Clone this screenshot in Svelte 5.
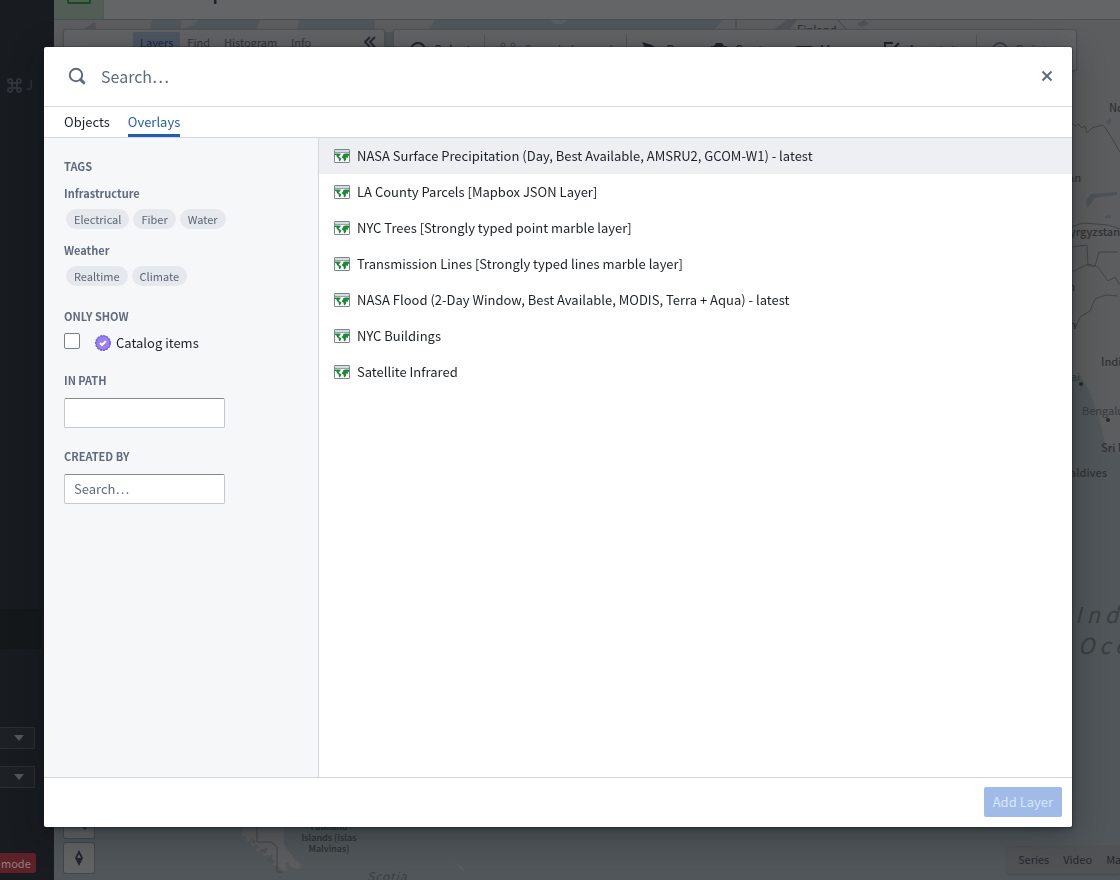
<script lang="ts">
  const tabs = ["Objects", "Overlays"];

  const tagGroups = [
    { name: "Infrastructure", tags: ["Electrical", "Fiber", "Water"] },
    { name: "Weather", tags: ["Realtime", "Climate"] },
  ];

  const layers = [
    "NASA Surface Precipitation (Day, Best Available, AMSRU2, GCOM-W1) - latest",
    "LA County Parcels [Mapbox JSON Layer]",
    "NYC Trees [Strongly typed point marble layer]",
    "Transmission Lines [Strongly typed lines marble layer]",
    "NASA Flood (2-Day Window, Best Available, MODIS, Terra + Aqua) - latest",
    "NYC Buildings",
    "Satellite Infrared",
  ];

  let activeTab = $state("Overlays");
  let selected = $state(0);
  let query = $state("");
  let path = $state("");
  let author = $state("");
  let catalogOnly = $state(false);
</script>

<div class="app">
  <aside class="rail">
    <div class="shortcut">
      <svg width="15" height="15" viewBox="0 0 15 15">
        <path d="M5 5V3a2 2 0 1 0-2 2h9a2 2 0 1 0-2-2v9a2 2 0 1 0 2-2H3a2 2 0 1 0 2 2z" />
      </svg>
      <span>J</span>
    </div>
    <div class="rail-bottom">
      <div class="rail-row"></div>
      {#each ["Branch", "Version"] as name}
        <button class="rail-select" aria-label={name}>
          <svg width="10" height="6" viewBox="0 0 10 6"><path d="M0 0h10L5 6z" /></svg>
        </button>
      {/each}
      <span class="mode">mode</span>
    </div>
  </aside>

  <main class="workspace">
    <header class="titlebar">
      <div class="app-icon">
        <svg width="24" height="24" viewBox="0 0 24 24">
          <rect x="1" y="1" width="22" height="22" rx="1" />
          <path d="M7 13v6M7 19h4" />
        </svg>
      </div>
      <span class="title">Untitled map</span>
    </header>

    <div class="canvas">
      <svg class="map" viewBox="54 20 1066 860" preserveAspectRatio="xMinYMin slice">
        <g class="land">
          <path d="M54 20H152L150 30H140L143 50H54z M181 20h17l-4 5-13 4z M260 20h40l-4 12h-40z M375 20h60l-8 12h-52z M550 20l5 4h8l4-4z M722 20h398V455L1110 444 1106 448 1101 425 1094 403 1086 385 1080 376 1072 378V100L700 50z" />
          <path d="M240 826l3 6-2 4 5 1 1 5 4-2 1 6 5 1-1 4 5 0 2 5 5-1 1 5 6 0-2 5 5 1 5 5 5-1-3-6 3-2 3 5 6 2 5-1-4-3 6 1-9-6-4-6-4-5-3-5v-17z M454 862l9 6v3l-3-3z" />
        </g>
        <g class="water">
          <path d="M773 30l14-10h10l-8 10z M1086 201l5-7 26-2v3l-22 3-8 10z M1105 216l6-1v3h-6z M1106 122l5-4v5l-3 2z" />
          <path d="M82 30l13-8 1 8z M857 24l7-4 5 4-8 3z" />
          <path d="M250 838l6 3-2 3 7 4-5-1z M259 850l9-2-3 6z M266 860l6-6 1 9z" />
        </g>
        <g class="borders">
          <path d="M736 20v10 M838 20l8 9 M257 826v16h14l6 5v25h6" />
          <path d="M1072 124l4 2 2-2 4 4 3-2 2 7 5-5 10-3 3 2 15 25 M1072 227l10-4 14 1 12 1 12 4 M1072 247l15-2 1 21h7l4-14h19 M1072 272l16-8 10 3 10 14 7-4 5 8 M1118 296l-12-1-11 4-5 12-10 6-5 11" />
        </g>
        <g class="cities">
          <circle cx="1081" cy="384" r="2" />
          <circle cx="1108" cy="420" r="2" />
        </g>
        <g class="labels">
          <text x="797" y="34">Finland</text>
          <text x="1109" y="112">Norilsk</text>
          <text x="1081" y="182" text-anchor="end">Kazakhstan</text>
          <text x="1120" y="236" text-anchor="end">Kyrgyzstan</text>
          <text x="1075" y="291" text-anchor="end">Iran</text>
          <text x="1076" y="329" text-anchor="end">Oman</text>
          <text x="1101" y="366">India</text>
          <text class="city" x="1080" y="381" text-anchor="end">Mumbai</text>
          <text class="city" x="1082" y="415">Bengaluru</text>
          <text x="1101" y="452">Sri Lanka</text>
          <text x="1107" y="477" text-anchor="end">Maldives</text>
        </g>
        <g class="small-labels" text-anchor="middle">
          <text x="329" y="830">Falkland</text>
          <text x="329" y="841">Islands (Islas</text>
          <text x="329" y="852">Malvinas)</text>
        </g>
        <g class="sea-labels">
          <text x="1075" y="623">Indian</text>
          <text x="1078" y="654">Ocean</text>
          <text class="sea-small" x="367" y="881">Scotia</text>
        </g>
      </svg>

      <div class="panels">
        <nav class="side-panel">
          <a class="panel-tab current" href="#layers">Layers</a>
          <a class="panel-tab" href="#find">Find</a>
          <a class="panel-tab" href="#histogram">Histogram</a>
          <a class="panel-tab" href="#info">Info</a>
          <button class="collapse" aria-label="Collapse panel">
            <svg width="12" height="12" viewBox="0 0 12 12"><path d="M6 1L1 6l5 5M11 1L6 6l5 5" /></svg>
          </button>
        </nav>
        <div class="toolbar">
          <button class="tool">
            <svg width="16" height="16" viewBox="0 0 16 16"><circle cx="8" cy="8" r="7" /></svg>
            Select
          </button>
          <button class="tool muted divided">
            <svg width="16" height="16" viewBox="0 0 16 16"><circle class="thin" cx="3" cy="3" r="2" /><circle class="thin" cx="13" cy="3" r="2" /><path d="M4 5l4 8 4-8" /></svg>
            Search Around
          </button>
          <button class="tool divided">
            <svg width="16" height="16" viewBox="0 0 16 16"><path class="fill" d="M0 0l10 3 4 3-5 8-4-4z" /></svg>
            Draw
          </button>
          <button class="tool">
            <svg width="16" height="16" viewBox="0 0 16 16"><path class="fill" d="M0 4h3l2-3h6l2 3h3v11H0z" /></svg>
            Capture
          </button>
          <button class="tool">
            <svg width="16" height="16" viewBox="0 0 16 16"><path class="fill" d="M0 4h16v8H0z" /></svg>
            Measure
          </button>
          <button class="tool">
            <svg width="16" height="16" viewBox="0 0 16 16"><path d="M9 1H1v14h12V8M6 10l9-9" /></svg>
            Annotate
          </button>
          <button class="tool muted divided">
            <svg width="16" height="16" viewBox="0 0 16 16"><circle cx="8" cy="8" r="7" /></svg>
            Pointer
          </button>
        </div>
      </div>

      <div class="map-controls">
        <div class="zoom">
          <button aria-label="Zoom to area">
            <svg width="16" height="16" viewBox="0 0 16 16"><circle cx="6" cy="6" r="4" /><path d="M9 9l6 5" /></svg>
          </button>
          <button aria-label="Reset bearing">
            <svg width="16" height="16" viewBox="0 0 16 16"><path class="needle" fill-rule="evenodd" d="M8 0l4 8-4 8-4-8zM8 4L6 8h4z" /></svg>
          </button>
        </div>
        <div class="timeline">
          <span>Series</span><span>Video</span><span>Map</span>
        </div>
      </div>
    </div>
  </main>
</div>

<div class="overlay">
  <div class="dialog" role="dialog" aria-modal="true" aria-label="Add layer">
    <div class="search">
      <svg width="18" height="18" viewBox="0 0 18 18">
        <circle cx="8" cy="8" r="6.2" />
        <path class="handle" d="M12.6 12.6l3.2 3.2" />
      </svg>
      <input type="text" placeholder="Search…" aria-label="Search" bind:value={query} />
      <button class="close" aria-label="Close">
        <svg width="12" height="12" viewBox="0 0 12 12"><path d="M1.5 1.5l9 9M10.5 1.5l-9 9" /></svg>
      </button>
    </div>

    <div class="tabs" role="tablist">
      {#each tabs as tab}
        <button
          class="tab"
          class:active={tab === activeTab}
          role="tab"
          aria-selected={tab === activeTab}
          onclick={() => (activeTab = tab)}>{tab}</button
        >
      {/each}
    </div>

    <div class="body">
      <section class="filters">
        <h2>TAGS</h2>
        {#each tagGroups as group}
          <h3>{group.name}</h3>
          <div class="tags">
            {#each group.tags as tag}
              <button class="tag">{tag}</button>
            {/each}
          </div>
        {/each}

        <h2 class="spaced">ONLY SHOW</h2>
        <label class="check">
          <input type="checkbox" bind:checked={catalogOnly} />
          <svg width="16" height="16" viewBox="0 0 16 16">
            <circle class="scallop" cx="8" cy="8" r="7" />
            <circle class="seal" cx="8" cy="8" r="7" />
            <path d="M5 8l2 2 4-4" />
          </svg>
          Catalog items
        </label>

        <label class="field">
          <span>IN PATH</span>
          <input type="text" bind:value={path} />
        </label>
        <label class="field">
          <span>CREATED BY</span>
          <input type="text" placeholder="Search…" bind:value={author} />
        </label>
      </section>

      <div class="results" role="listbox" aria-label="Overlays">
        {#each layers as layer, i}
          <button
            class="result"
            class:selected={i === selected}
            role="option"
            aria-selected={i === selected}
            onclick={() => (selected = i)}
          >
            <svg width="16" height="14" viewBox="0 0 16 14">
              <rect class="frame" x="0.5" y="0.5" width="15" height="13" rx="0.5" />
              <path class="bar" d="M1 2h14" />
              <path class="rule" d="M1 3.5h14" />
              <path class="world" d="M1 4.5h5.8L6.2 6 4.8 7.2l.6 1 1.8.9-.3 1.6-1 1.6-1-.6-.2-2.1-1.6-1.3L2.3 6.3 1 6z M8 7.6l1-1 .4-1.5L11.2 4.5H15v2l-.9.8-.2 1.9-1-.9-.7.5-.2 1.7-1.2 1.9-1-.7-.2-2L8.3 9z" />
            </svg>
            <span>{layer}</span>
          </button>
        {/each}
      </div>
    </div>

    <footer>
      <button class="add" disabled>Add Layer</button>
    </footer>
  </div>
</div>

<style>
  :global(body) {
    background: #505659;
    overflow: hidden;
  }

  .app,
  .overlay {
    font-family: "Noto Sans CJK SC", "Source Sans Pro", sans-serif;
    font-size: 13px;
    line-height: 20px;
    color: #1c2127;
  }

  .app *,
  .overlay,
  .overlay * {
    box-sizing: border-box;
  }

  button,
  input {
    font: inherit;
    color: inherit;
    margin: 0;
    padding: 0;
    border: 0;
    background: none;
  }

  svg {
    display: block;
    flex: none;
    fill: none;
    stroke: currentColor;
  }

  h2,
  h3 {
    margin: 0;
    font-size: 11px;
    font-weight: 700;
    color: #5f6b7c;
  }

  .app {
    display: flex;
    height: 100vh;
  }

  .rail {
    display: flex;
    flex-direction: column;
    width: 54px;
    flex: none;
    background: #181b20;
  }

  .shortcut {
    display: flex;
    align-items: center;
    gap: 4px;
    padding: 75px 0 0 7px;
    color: #2f353d;
  }

  .shortcut svg {
    stroke-width: 2;
  }

  .rail-bottom {
    display: flex;
    flex-direction: column;
    align-items: flex-start;
    margin-top: auto;
    padding-bottom: 7px;
  }

  .rail-row {
    width: 42px;
    height: 40px;
    margin-bottom: 78px;
    background: #14181b;
  }

  .rail-select {
    display: flex;
    align-items: center;
    justify-content: flex-end;
    width: 35px;
    height: 22px;
    margin-bottom: 17px;
    padding-right: 10px;
    border: 1px solid #2b2e33;
    border-left: 0;
    background: #1d2024;
    color: #53565b;
  }

  .rail-select svg {
    fill: currentColor;
    stroke: none;
  }

  .mode {
    width: 36px;
    height: 20px;
    margin-top: 48px;
    padding-left: 1px;
    border-radius: 0 2px 2px 0;
    font-size: 11px;
    background: #5d2227;
    color: #8f8082;
  }

  .workspace {
    display: flex;
    flex-direction: column;
    flex: 1;
    min-width: 0;
  }

  .titlebar {
    display: flex;
    align-items: flex-end;
    height: 20px;
    flex: none;
    overflow: hidden;
    background: #646567;
    border-bottom: 1px solid #4b4e50;
  }

  .app-icon {
    display: flex;
    width: 50px;
    height: 50px;
    flex: none;
    padding: 11px 0 0 13px;
    border-right: 1px solid #4c5c51;
    background: #525d56;
    color: #174a22;
  }

  .app-icon svg {
    stroke-width: 2;
  }

  .title {
    padding: 0 0 15px 15px;
    font-size: 16px;
    font-weight: 700;
    line-height: 22px;
    color: #1e2126;
  }

  .canvas {
    position: relative;
    flex: 1;
    min-height: 0;
    overflow: hidden;
    background: #505659;
  }

  .map {
    position: absolute;
    inset: 0;
    width: 100%;
    height: 100%;
    stroke: none;
  }

  .land {
    fill: #5c5d5f;
  }

  .water {
    fill: #4c5255;
  }

  .borders {
    fill: none;
    stroke: #424446;
  }

  .cities {
    fill: #27292b;
  }

  .labels {
    font-size: 11px;
    font-weight: 500;
    fill: #303235;
  }

  .city {
    font-weight: 400;
    fill: #383a3d;
  }

  .small-labels {
    font-size: 9px;
    font-weight: 500;
    fill: #2c2f31;
  }

  .sea-labels {
    font-size: 22px;
    font-style: italic;
    letter-spacing: 5px;
    fill: #3a3e41;
  }

  .sea-small {
    font-size: 12px;
    letter-spacing: 1px;
  }

  .panels {
    position: relative;
    display: flex;
    align-items: flex-start;
    gap: 10px;
    padding: 10px 44px 0 10px;
  }

  .side-panel,
  .toolbar,
  .timeline {
    border-radius: 2px;
    background: #626365;
    box-shadow: 0 0 0 1px #4f5153, 0 1px 3px #3b3d40;
  }

  .side-panel {
    display: flex;
    width: 320px;
    height: 40px;
    flex: none;
    padding: 2px 8px 0 69px;
  }

  .panel-tab {
    height: 20px;
    padding: 0 7px;
    border-radius: 2px;
    font-size: 11px;
    color: #303338;
    text-decoration: none;
  }

  .panel-tab.current {
    background: #4d5562;
    color: #172b4d;
  }

  .collapse {
    display: flex;
    align-items: center;
    height: 20px;
    margin-left: auto;
    color: #252a31;
  }

  .collapse svg {
    stroke-width: 2;
  }

  .toolbar {
    display: flex;
    justify-content: space-between;
    flex: 1;
    height: 40px;
    overflow: hidden;
    padding: 0 16px;
  }

  .tool {
    display: flex;
    align-items: center;
    gap: 8px;
    white-space: nowrap;
    color: #1d242c;
  }

  .tool.muted {
    color: #3e4246;
  }

  .tool.divided {
    height: 30px;
    margin-top: 5px;
    padding-left: 15px;
    border-left: 1px solid #515355;
  }

  .tool svg {
    stroke-width: 2;
  }

  .tool .thin {
    stroke-width: 1;
  }

  .tool .fill {
    fill: currentColor;
    stroke: none;
  }

  .map-controls {
    position: absolute;
    inset: auto 0 7px 10px;
    display: flex;
    align-items: flex-end;
    justify-content: space-between;
  }

  .zoom {
    display: flex;
    flex-direction: column;
    gap: 5px;
  }

  .zoom button {
    display: grid;
    place-items: center;
    width: 30px;
    height: 30px;
    border-radius: 2px;
    background: #626365;
    box-shadow: 0 0 0 1px #44474a;
    color: #20262e;
  }

  .zoom svg {
    stroke-width: 2;
  }

  .needle {
    fill: currentColor;
    stroke: none;
  }

  .timeline {
    display: flex;
    gap: 14px;
    width: 112px;
    height: 26px;
    overflow: hidden;
    padding: 2px 0 0 10px;
    font-size: 11px;
    background: #515254;
    color: #25282c;
  }

  .overlay {
    position: fixed;
    inset: 0;
    display: flex;
    padding: 47px 48px 53px 44px;
  }

  .dialog {
    display: flex;
    flex-direction: column;
    flex: 1;
    min-width: 0;
    border-radius: 2px;
    overflow: hidden;
    background: #fff;
    box-shadow: 0 0 0 1px rgba(16, 22, 26, 0.2), 0 2px 4px rgba(16, 22, 26, 0.4), 0 8px 32px rgba(16, 22, 26, 0.4);
  }

  .search {
    display: flex;
    align-items: center;
    height: 60px;
    flex: none;
    padding: 0 19px 1px 24px;
    border-bottom: 1px solid #d9dce1;
    color: #5f6b7c;
  }

  .search svg {
    stroke-width: 2;
  }

  .handle {
    stroke-width: 3;
    stroke-linecap: round;
  }

  .search input {
    flex: 1;
    min-width: 0;
    height: 40px;
    padding-left: 15px;
    font-size: 16px;
    outline: 0;
  }

  input::placeholder {
    color: #5f6b7c;
    opacity: 1;
  }

  .tabs {
    display: flex;
    gap: 18px;
    height: 31px;
    flex: none;
    padding: 0 20px;
    border-bottom: 1px solid #d3d8de;
  }

  .tab {
    padding-top: 2px;
    border-bottom: 3px solid transparent;
  }

  .tab.active {
    border-bottom-color: #215db0;
    color: #215db0;
  }

  .body {
    display: flex;
    flex: 1;
    min-height: 0;
  }

  .filters {
    width: 275px;
    flex: none;
    padding: 18px 20px;
    border-right: 1px solid #d3d6da;
    background: #f6f7f9;
  }

  h3 {
    margin-top: 7px;
  }

  .tags {
    display: flex;
    gap: 4px;
    margin: 6px 2px 11px;
  }

  .tags + h3 {
    margin-top: 0;
  }

  .tag {
    height: 20px;
    padding: 0 8px 1px;
    border-radius: 10px;
    font-size: 11px;
    line-height: 18px;
    background: #e5e8ec;
    color: #5d6670;
  }

  .spaced {
    margin-top: 20px;
  }

  .check {
    display: flex;
    align-items: center;
    margin: 7px 0 17px;
  }

  .check input {
    appearance: none;
    align-self: flex-start;
    width: 16px;
    height: 16px;
    margin-right: 15px;
    border: 1px solid #738091;
    border-radius: 2px;
    background: #fff;
  }

  .check input:checked {
    background: #2d72d2;
  }

  .check svg {
    margin-right: 5px;
    stroke: #fff;
    stroke-width: 2;
  }

  .check .scallop {
    stroke: #7961db;
    stroke-dasharray: 2 1;
  }

  .check .seal {
    fill: #9881f3;
    stroke: #7961db;
    stroke-width: 1;
  }

  .field {
    display: flex;
    flex-direction: column;
    gap: 8px;
    margin-bottom: 18px;
  }

  .field span {
    font-size: 11px;
    font-weight: 700;
    color: #5f6b7c;
  }

  .field input {
    width: 161px;
    height: 30px;
    padding: 0 9px 1px;
    border: 1px solid #c5c8cc;
    border-top-color: #85898f;
    border-radius: 2px;
    background: #fff;
  }

  .results {
    flex: 1;
    min-width: 0;
    overflow: hidden;
  }

  .result {
    display: flex;
    align-items: center;
    gap: 7px;
    width: 100%;
    height: 36px;
    padding: 0 15px;
    white-space: nowrap;
    text-align: left;
  }

  .result.selected {
    background: #edeff2;
  }

  .frame {
    fill: #fff;
    stroke: #7f858c;
  }

  .bar {
    stroke: #d5dce3;
    stroke-width: 2;
  }

  .rule {
    stroke: #9aa3ad;
  }

  .world {
    fill: #1f8a35;
    stroke: none;
  }

  footer {
    display: flex;
    justify-content: flex-end;
    flex: none;
    padding: 9px 10px 10px;
    border-top: 1px solid #d3d6da;
  }

  .add {
    height: 30px;
    padding: 0 9px;
    border-radius: 2px;
    background: #a0bbe8;
    color: #dbe6f8;
  }
</style>
